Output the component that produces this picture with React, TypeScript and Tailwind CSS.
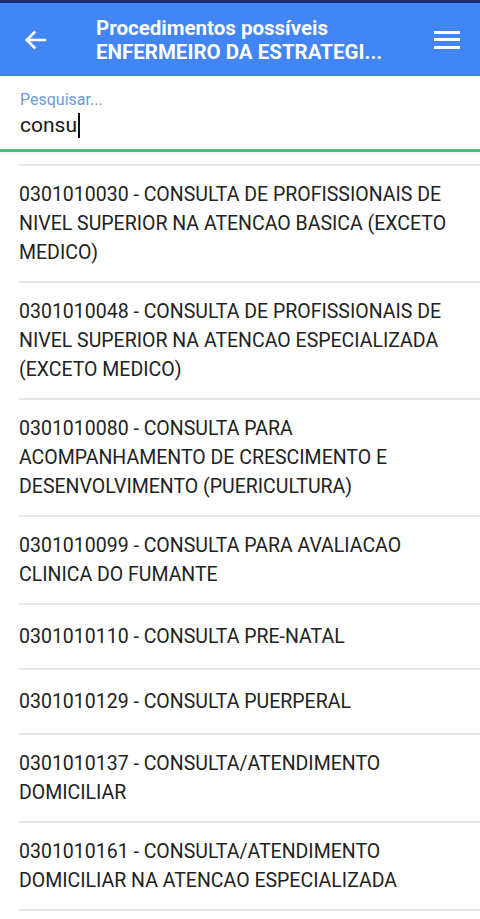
import React from "react";

const items = [
  "0301010030 - CONSULTA DE PROFISSIONAIS DE NIVEL SUPERIOR NA ATENCAO BASICA (EXCETO MEDICO)",
  "0301010048 - CONSULTA DE PROFISSIONAIS DE NIVEL SUPERIOR NA ATENCAO ESPECIALIZADA (EXCETO MEDICO)",
  "0301010080 - CONSULTA PARA ACOMPANHAMENTO DE CRESCIMENTO E DESENVOLVIMENTO (PUERICULTURA)",
  "0301010099 - CONSULTA PARA AVALIACAO CLINICA DO FUMANTE",
  "0301010110 - CONSULTA PRE-NATAL",
  "0301010129 - CONSULTA PUERPERAL",
  "0301010137 - CONSULTA/ATENDIMENTO DOMICILIAR",
  "0301010161 - CONSULTA/ATENDIMENTO DOMICILIAR NA ATENCAO ESPECIALIZADA",
];

export default function App() {
  return (
    <div
      className="w-[480px] h-[919px] bg-white overflow-hidden"
      style={{ fontFamily: "Roboto, 'Noto Sans', sans-serif" }}
    >
      <div className="h-[3px] bg-[#1d2c6e]" />
      <header className="h-[73px] bg-[#4285f4] flex items-center">
        <div className="w-[96px] flex items-center pl-[21px]">
          <svg width="28" height="28" viewBox="0 0 24 24">
            <path
              d="M20.5 12H5M11.5 5.5L5 12l6.5 6.5"
              fill="none"
              stroke="white"
              strokeWidth="2.3"
              strokeLinecap="square"
            />
          </svg>
        </div>
        <div className="flex-1 text-white font-bold text-[20.5px] leading-[24px] pt-[1px]">
          <div>Procedimentos possíveis</div>
          <div>ENFERMEIRO DA ESTRATEGI...</div>
        </div>
        <div className="flex flex-col gap-[4.5px] mr-[20px]">
          <div className="w-[26px] h-[3px] bg-white" />
          <div className="w-[26px] h-[3px] bg-white" />
          <div className="w-[26px] h-[3px] bg-white" />
        </div>
      </header>
      <div className="px-[20px] pt-[14px] h-[76px] border-b-[3px] border-[#4fb97f] shadow-[0_2px_3px_rgba(0,0,0,0.06)]">
        <div className="text-[16px] leading-[20px] text-[#6b9bd6]">Pesquisar...</div>
        <div className="flex items-center h-[30px]">
          <span className="text-[21px] text-[#151515] leading-[30px]">consu</span>
          <span className="w-[2px] h-[25px] bg-[#111] ml-[1px]" />
        </div>
      </div>
      <div className="mt-[12px] ml-[19px] border-t-2 border-[#e6e6e6]">
        {items.map((t) => (
          <div
            key={t}
            className="min-h-[65px] flex items-center py-[14px] pr-[20px] border-b-2 border-[#e6e6e6] text-[19.5px] leading-[29px] text-[#222]"
          >
            <span>{t}</span>
          </div>
        ))}
      </div>
    </div>
  );
}
